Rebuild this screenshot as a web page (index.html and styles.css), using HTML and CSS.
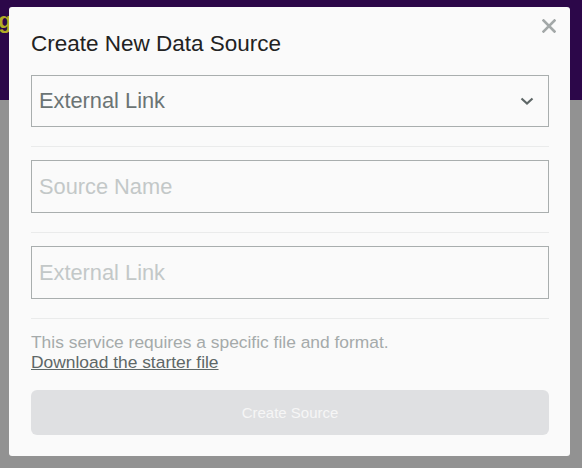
FILE: index.html
```html
<!DOCTYPE html>
<html lang="en">
<head>
  <meta charset="UTF-8">
  <meta name="viewport" content="width=device-width, initial-scale=1.0">
  <title>Create New Data Source</title>
  <link rel="stylesheet" href="styles.css">
</head>
<body>
  <header class="topbar">
    <span class="brand">Catalog</span>
  </header>

  <div class="overlay">
    <div class="modal">
      <button class="close-btn" aria-label="Close">
        <svg width="14" height="14" viewBox="0 0 14 14">
          <path d="M1.5 1.5 L12.5 12.5 M12.5 1.5 L1.5 12.5" stroke="currentColor" stroke-width="2.6" stroke-linecap="square" fill="none"/>
        </svg>
      </button>

      <h2 class="modal-title">Create New Data Source</h2>

      <div class="select">
        <span>External Link</span>
        <svg width="14" height="8" viewBox="0 0 14 8">
          <path d="M1.5 1.5 L7 6.5 L12.5 1.5" stroke="currentColor" stroke-width="2.2" fill="none"/>
        </svg>
      </div>

      <div class="form-group">
        <input class="field" type="text" placeholder="Source Name">
      </div>

      <div class="form-group">
        <input class="field" type="text" placeholder="External Link">
      </div>

      <div class="form-group">
        <p class="note">This service requires a specific file and format.<br>
          <a href="#" class="note-link">Download the starter file</a></p>
      </div>

      <button class="submit-btn" disabled>Create Source</button>
    </div>
  </div>
</body>
</html>
```

FILE: styles.css
```css
body {
  margin: 0;
  min-height: 100vh;
  background: #929292;
  font-family: 'Liberation Sans', Arial, sans-serif;
  overflow: hidden;
}

.topbar {
  height: 100px;
  background: #2c0749;
  padding-top: 8px;
  box-sizing: border-box;
}

.brand {
  display: inline-block;
  margin-left: -69px;
  font-size: 22px;
  font-weight: 700;
  color: #b3ad24;
}

.overlay {
  position: absolute;
  top: 0;
  left: 0;
  width: 100%;
  height: 100%;
}

.modal {
  position: absolute;
  top: 7px;
  left: 9px;
  width: 561px;
  box-sizing: border-box;
  padding: 24px 21px 21px 22px;
  background: #fafafa;
  border-radius: 3px;
}

.close-btn {
  position: absolute;
  top: 12px;
  right: 14px;
  width: 14px;
  height: 14px;
  padding: 0;
  border: none;
  background: none;
  color: #a3a8a8;
  cursor: pointer;
  display: flex;
}

.modal-title {
  margin: 0 0 18px;
  font-size: 22.5px;
  line-height: 26px;
  font-weight: 400;
  color: #222;
}

.select {
  display: flex;
  align-items: center;
  justify-content: space-between;
  height: 52px;
  box-sizing: border-box;
  padding: 0 14px 0 7px;
  border: 1px solid #a9aeae;
  font-size: 21.8px;
  line-height: 24px;
  color: #6b7474;
}

.select svg {
  color: #5e6767;
}

.form-group {
  margin-top: 19px;
  padding-top: 13px;
  border-top: 1px solid #eaebeb;
}

.field {
  display: block;
  width: 100%;
  height: 53px;
  box-sizing: border-box;
  margin: 0;
  padding: 0 7px;
  border: 1px solid #a9aeae;
  border-radius: 0;
  background: transparent;
  font-family: 'Liberation Sans', Arial, sans-serif;
  font-size: 21.8px;
  color: #333;
  outline: none;
}

.field::placeholder {
  color: #c3c8c8;
}

.note {
  margin: 0;
  font-size: 17.4px;
  line-height: 20px;
  color: #a5aaaa;
}

.note-link {
  color: #5e6767;
  text-decoration: underline;
}

.submit-btn {
  display: block;
  width: 100%;
  height: 45px;
  margin-top: 18px;
  border: none;
  border-radius: 6px;
  background: #dfe0e2;
  color: #f6f6f6;
  font-family: 'Liberation Sans', Arial, sans-serif;
  font-size: 15px;
}
```
